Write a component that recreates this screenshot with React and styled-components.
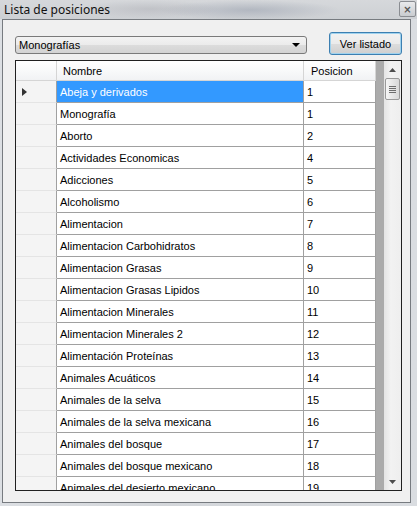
import React from 'react';
import styled, { createGlobalStyle } from 'styled-components';

const GlobalStyle = createGlobalStyle`
  html, body {
    margin: 0;
    padding: 0;
    background: #d9dbde;
  }
  * {
    box-sizing: border-box;
  }
`;

const rows = [
  ['Abeja y derivados', 1],
  ['Monografía', 1],
  ['Aborto', 2],
  ['Actividades Economicas', 4],
  ['Adicciones', 5],
  ['Alcoholismo', 6],
  ['Alimentacion', 7],
  ['Alimentacion Carbohidratos', 8],
  ['Alimentacion Grasas', 9],
  ['Alimentacion Grasas Lipidos', 10],
  ['Alimentacion Minerales', 11],
  ['Alimentacion Minerales 2', 12],
  ['Alimentación Proteínas', 13],
  ['Animales Acuáticos', 14],
  ['Animales de la selva', 15],
  ['Animales de la selva mexicana', 16],
  ['Animales del bosque', 17],
  ['Animales del bosque mexicano', 18],
  ['Animales del desierto mexicano', 19],
];

const Window = styled.div`
  width: 417px;
  height: 506px;
  display: flex;
  flex-direction: column;
  background: linear-gradient(90deg, #dcdfe3 0%, #d3d6da 40%, #dadde1 100%);
  padding: 0 6px 3px 2px;
  overflow: hidden;
`;

const TitleBar = styled.div`
  height: 19px;
  flex: none;
  display: flex;
  align-items: center;
  justify-content: space-between;
  margin: 0 -6px 0 -2px;
  padding: 0 1px 0 4px;
  background:
    radial-gradient(ellipse 90px 10px at 250px 10px, rgba(120, 130, 150, 0.35), transparent),
    radial-gradient(ellipse 70px 9px at 150px 9px, rgba(140, 140, 150, 0.25), transparent),
    linear-gradient(180deg, #d6d8db 0%, #cdd0d4 100%);
`;

const TitleText = styled.span`
  font-family: 'Noto Sans', 'DejaVu Sans', sans-serif;
  font-size: 12px;
  color: #111;
  line-height: 17px;
`;

const CloseButton = styled.div`
  width: 17px;
  height: 16px;
  margin-top: -1px;
  border: 1px solid #8a8d92;
  border-radius: 2px;
  background: linear-gradient(180deg, #e9eaec 0%, #c9ccd0 100%);
  display: flex;
  align-items: center;
  justify-content: center;
  font-family: 'DejaVu Sans', sans-serif;
  font-size: 10px;
  font-weight: bold;
  color: #555;
`;

const Client = styled.div`
  flex: 1;
  min-height: 0;
  display: flex;
  flex-direction: column;
  border: 1px solid #777b80;
  background: #f0f0f0;
  padding: 12px 8px 11px 12px;
`;

const Toolbar = styled.div`
  display: flex;
  flex: none;
  align-items: flex-start;
  justify-content: space-between;
  height: 23px;
  margin-bottom: 5px;
`;

const Combo = styled.div`
  width: 292px;
  height: 18px;
  margin-top: 4px;
  border: 1px solid #7a7a7a;
  border-radius: 3px;
  background: linear-gradient(180deg, #f3f3f3 0%, #ebebeb 50%, #dcdcdc 51%, #d3d3d3 100%);
  display: flex;
  align-items: center;
  justify-content: space-between;
  padding: 0 6px 0 3px;
  font-family: 'Liberation Sans', Arial, sans-serif;
  font-size: 11px;
  color: #000;
`;

const Arrow = styled.span`
  width: 0;
  height: 0;
  border-left: 4px solid transparent;
  border-right: 4px solid transparent;
  border-top: 4px solid #000;
`;

const Button = styled.div`
  width: 73px;
  height: 23px;
  border: 1px solid #3c7fb1;
  border-radius: 3px;
  box-shadow: inset 0 0 0 1px #9fd2ee;
  background: linear-gradient(180deg, #f2f2f2 0%, #ebebeb 50%, #dddddd 51%, #cfcfcf 100%);
  display: flex;
  align-items: center;
  justify-content: center;
  font-family: 'Liberation Sans', Arial, sans-serif;
  font-size: 11px;
  color: #000;
`;

const Grid = styled.div`
  flex: 1;
  display: flex;
  border: 1px solid #202020;
  background: #ababab;
  overflow: hidden;
  min-height: 0;
`;

const Table = styled.div`
  width: 360px;
  flex: none;
  display: flex;
  flex-direction: column;
  overflow: hidden;
`;

const Row = styled.div`
  display: grid;
  grid-template-columns: 41px 247px 72px;
  flex: none;
  height: ${(p) => (p.$header ? '20px' : '22px')};
`;

const HeaderCell = styled.div`
  background: linear-gradient(180deg, #ffffff 0%, #f7f8f9 60%, #f1f2f4 100%);
  border-right: 1px solid #d5d5d5;
  border-bottom: 1px solid #d5d5d5;
  display: flex;
  align-items: center;
  padding-left: ${(p) => p.$pad || 6}px;
  font-family: 'Liberation Sans', Arial, sans-serif;
  font-size: 11px;
  color: #000;
`;

const RowHead = styled.div`
  background: #f4f4f4;
  border-right: 1px solid #a0a0a0;
  border-bottom: 1px solid #e4e4e4;
  display: flex;
  align-items: center;
  padding-left: 6px;
`;

const Pointer = styled.span`
  width: 0;
  height: 0;
  border-top: 4px solid transparent;
  border-bottom: 4px solid transparent;
  border-left: 5px solid #333;
`;

const Cell = styled.div`
  background: ${(p) => (p.$selected ? '#3399ff' : '#ffffff')};
  color: ${(p) => (p.$selected ? '#ffffff' : '#000000')};
  border-right: 1px solid #a0a0a0;
  border-bottom: 1px solid #a0a0a0;
  display: flex;
  align-items: center;
  padding: 1px 0 0 3px;
  font-family: 'Liberation Sans', Arial, sans-serif;
  font-size: 11px;
  white-space: nowrap;
  overflow: hidden;
`;

const Filler = styled.div`
  flex: 1;
  background: #ababab;
`;

const ScrollBar = styled.div`
  width: 17px;
  flex: none;
  display: flex;
  flex-direction: column;
  background: linear-gradient(90deg, #e4e4e4 0%, #f2f2f2 40%, #eeeeee 100%);
`;

const ScrollArrow = styled.div`
  height: 17px;
  flex: none;
  display: flex;
  align-items: center;
  justify-content: center;
`;

const Thumb = styled.div`
  height: 22px;
  flex: none;
  margin: 0 1px;
  border: 1px solid #9a9a9a;
  border-radius: 2px;
  background: linear-gradient(90deg, #f6f6f6 0%, #e6e6e6 50%, #d8d8d8 100%);
  display: flex;
  flex-direction: column;
  align-items: center;
  justify-content: center;
  gap: 1px;
`;

const Grip = styled.span`
  width: 7px;
  height: 1px;
  background: #6d6d6d;
`;

const Track = styled.div`
  flex: 1;
`;

const UpDown = ({ down }) => (
  <svg width="7" height="4" viewBox="0 0 7 4">
    <path d={down ? 'M0 0 H7 L3.5 4 Z' : 'M0 4 H7 L3.5 0 Z'} fill="#4d4d4d" />
  </svg>
);

export default function App() {
  return (
    <>
      <GlobalStyle />
      <Window>
        <TitleBar>
          <TitleText>Lista de posiciones</TitleText>
          <CloseButton>×</CloseButton>
        </TitleBar>
        <Client>
          <Toolbar>
            <Combo>
              <span>Monografías</span>
              <Arrow />
            </Combo>
            <Button>Ver listado</Button>
          </Toolbar>
          <Grid>
            <Table>
              <Row $header>
                <HeaderCell />
                <HeaderCell $pad={6}>Nombre</HeaderCell>
                <HeaderCell $pad={7}>Posicion</HeaderCell>
              </Row>
              {rows.map(([name, pos], i) => (
                <Row key={name}>
                  <RowHead>{i === 0 && <Pointer />}</RowHead>
                  <Cell $selected={i === 0}>{name}</Cell>
                  <Cell>{pos}</Cell>
                </Row>
              ))}
            </Table>
            <Filler />
            <ScrollBar>
              <ScrollArrow>
                <UpDown />
              </ScrollArrow>
              <Thumb>
                <Grip />
                <Grip />
                <Grip />
                <Grip />
              </Thumb>
              <Track />
              <ScrollArrow>
                <UpDown down />
              </ScrollArrow>
            </ScrollBar>
          </Grid>
        </Client>
      </Window>
    </>
  );
}
